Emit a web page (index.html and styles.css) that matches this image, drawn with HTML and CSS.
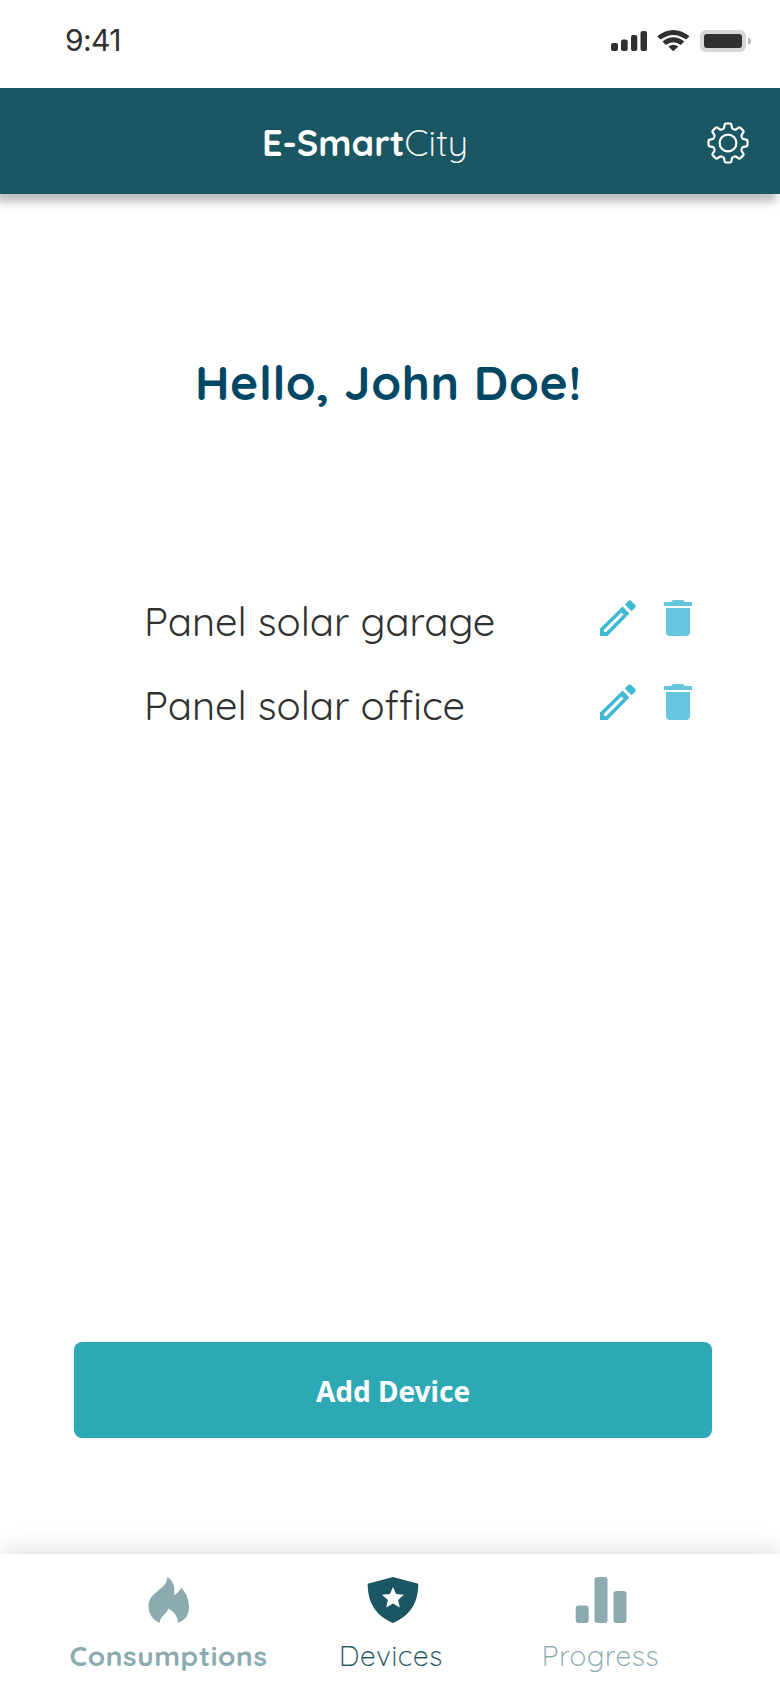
FILE: index.html
```
<!DOCTYPE html>
<html lang="en">
<head>
<meta charset="utf-8">
<title>E-SmartCity</title>
<link rel="stylesheet" href="styles.css">
</head>
<body>
<div class="screen">
  <div class="status">
    <span class="clock">9:41</span>
    <svg class="indicators" width="142" height="24" viewBox="610 29 142 24" fill="#303030">
      <rect x="611" y="43" width="7" height="8" rx="2"/>
      <rect x="621" y="39.5" width="6.7" height="11.5" rx="2"/>
      <rect x="631" y="35" width="6.3" height="16" rx="2"/>
      <rect x="640.5" y="31" width="6.5" height="20" rx="2"/>
      <path d="M657.2 36.2Q673.3 24 689.5 36.2L686.2 39.6Q673.3 30.2 660.5 39.6Z"/>
      <path d="M662.5 41.5Q673.3 33.2 684.2 41.5L680.8 45Q673.3 39.4 665.9 45Z"/>
      <path d="M668.3 46.6Q673.3 43 678.4 46.6L673.3 51.3Z"/>
      <rect x="700" y="30" width="46" height="22" rx="6" fill="#d6d6d6"/>
      <rect x="704" y="34" width="38" height="14" rx="3"/>
      <path d="M748 37.5Q751 38.5 751 41T748 44.5Z" fill="#b5b5b5"/>
    </svg>
  </div>
  <header class="header">
    <h1 class="brand"><b class="brand-bold">E-Smart</b><span class="brand-light">City</span></h1>
    <svg class="gear" width="42" height="42" viewBox="-21 -21 42 42" fill="none" stroke="#fff" stroke-width="2.2">
      <defs><path id="tooth" d="M-5.7-13.8Q-4.2-14.2-3.9-15.6L-3.4-18.3Q-3.1-19.5-2-19.5H2Q3.1-19.5 3.4-18.3L3.9-15.6Q4.2-14.2 5.7-13.8"/></defs>
      <circle r="8.4"/>
      <use href="#tooth"/><use href="#tooth" transform="rotate(45)"/><use href="#tooth" transform="rotate(90)"/><use href="#tooth" transform="rotate(135)"/>
      <use href="#tooth" transform="rotate(180)"/><use href="#tooth" transform="rotate(225)"/><use href="#tooth" transform="rotate(270)"/><use href="#tooth" transform="rotate(315)"/>
    </svg>
  </header>
  <main class="main">
    <h2 class="hello">Hello, John Doe!</h2>
    <ul class="devices">
      <li class="device">
        <span class="name">Panel solar garage</span>
        <svg class="pencil" width="36" height="36" viewBox="0 0 36 36"><path fill-rule="evenodd" d="M28.5.7Q29.7-.3 30.9.7L35.3 5.1Q36.4 6.3 35.3 7.5L31.6 11.2L24.8 4.4ZM22.6 6.6L29.4 13.4L7.5 36H0V28.5ZM4 29.8V32H6.2L23.6 14.6L21.4 12.4Z"/></svg>
        <svg class="trash" width="28" height="36" viewBox="0 0 28 36"><path d="M0 2H7L9 0H19L21 2H28V6H0ZM2 8H26V32Q26 36 22 36H6Q2 36 2 32Z"/></svg>
      </li>
      <li class="device">
        <span class="name">Panel solar office</span>
        <svg class="pencil" width="36" height="36" viewBox="0 0 36 36"><path fill-rule="evenodd" d="M28.5.7Q29.7-.3 30.9.7L35.3 5.1Q36.4 6.3 35.3 7.5L31.6 11.2L24.8 4.4ZM22.6 6.6L29.4 13.4L7.5 36H0V28.5ZM4 29.8V32H6.2L23.6 14.6L21.4 12.4Z"/></svg>
        <svg class="trash" width="28" height="36" viewBox="0 0 28 36"><path d="M0 2H7L9 0H19L21 2H28V6H0ZM2 8H26V32Q26 36 22 36H6Q2 36 2 32Z"/></svg>
      </li>
    </ul>
    <button class="add">Add Device</button>
  </main>
  <nav class="nav">
    <a class="tab consumptions">
      <svg width="42" height="46" viewBox="148 1577 42 46"><path d="M167.2 1577C173 1580 175.4 1587 174.3 1595C177.5 1593.5 180 1590.5 181.3 1587.7C186 1592.5 189 1599.5 189 1607C189 1615.500 184.800 1620.500 178 1622.800C178 1617 174 1611.500 168.300 1608.600C167.500 1614 160 1615.500 159.800 1622.800C153.500 1620.500 148.500 1614.500 148.500 1606.500C148.500 1591 167 1590.500 167.200 1577Z"/></svg>
      <span class="label">Consumptions</span>
    </a>
    <a class="tab selected">
      <svg width="52" height="46" viewBox="366.500 1577 52 46"><path fill-rule="evenodd" d="M392.500 1577L417.800 1583.800C417.800 1602 410.500 1615.500 392.500 1623C374.500 1615.500 367.200 1602 367.200 1583.800ZM392.500 1587L389.400 1594L381.500 1594.800L387.400 1600L385.700 1607.400L392.500 1603.500L399.300 1607.400L397.600 1600L403.500 1594.800L395.600 1594Z"/></svg>
      <span class="label">Devices</span>
    </a>
    <a class="tab progress">
      <svg width="52" height="46" viewBox="574.500 1577 52 46"><rect x="575.200" y="1605.500" width="13" height="17.500" rx="3"/><rect x="594" y="1577" width="13" height="46" rx="3"/><rect x="613" y="1591" width="13" height="32" rx="3"/></svg>
      <span class="label">Progress</span>
    </a>
  </nav>
</div>
</body>
</html>
```
FILE: styles.css
```
* { box-sizing: border-box; }
body { margin: 0; background: #fff; font-family: Quicksand, Lato, "Liberation Sans", sans-serif; }
.screen { width: 780px; height: 1688px; display: flex; flex-direction: column; overflow: hidden; }
.status { height: 88px; display: flex; justify-content: space-between; align-items: flex-start; padding: 29px 28px 0 65px; }
.clock { font: 400 30px/22px Inter, sans-serif; letter-spacing: -.6px; color: #303030; }
.header { height: 106px; background: #1b5663; color: #fff; display: flex; align-items: center; justify-content: space-between; padding: 0 31px 0 262px; box-shadow: -4px 8px 8px rgba(0,0,0,.25); }
.brand { margin: 4px 0 0; font-size: 36px; line-height: 44px; font-weight: 300; display: flex; }
.brand-bold { font-weight: 700; }
.brand-light { letter-spacing: .2px; -webkit-text-stroke: .2px currentColor; }
.gear { margin-top: 4px; }
.main { flex: 1; display: flex; flex-direction: column; }
.hello { margin: 158px 0 0 195px; font-size: 48px; line-height: 60px; font-weight: 700; letter-spacing: .6px; color: #004766; white-space: nowrap; }
.devices { list-style: none; margin: 164px 0 0; padding: 0 88px 0 144px; }
.device { height: 84px; display: flex; align-items: center; }
.name { flex: 1; font-size: 40px; line-height: 48px; font-weight: 400; color: #303030; white-space: nowrap; padding-top: 5px; }
.pencil { fill: #3fbad6; margin-right: 28px; }
.trash { fill: #67c5dd; }
.add { margin: auto 68px 116px 74px; height: 96px; border: 0; border-radius: 8px; background: #2da9b5; color: #fff; font: 700 28px/40px "Noto Sans", sans-serif; padding: 2px 0 0; }
.nav { height: 134px; display: grid; grid-template-columns: 221px 227px 189px; padding: 23px 0 0 58px; background: #fff; box-shadow: 0 -4px 24px rgba(0,0,0,.125); }
.tab { display: flex; flex-direction: column; align-items: center; gap: 16px; color: #8babb0; fill: currentColor; font-size: 28px; line-height: 34px; font-weight: 300; letter-spacing: .7px; }
.consumptions { font-weight: 700; letter-spacing: .6px; }
.selected { color: #1b5663; }
.selected .label { margin-right: 3px; }
.selected .label, .progress .label { -webkit-text-stroke: .2px currentColor; }
```
